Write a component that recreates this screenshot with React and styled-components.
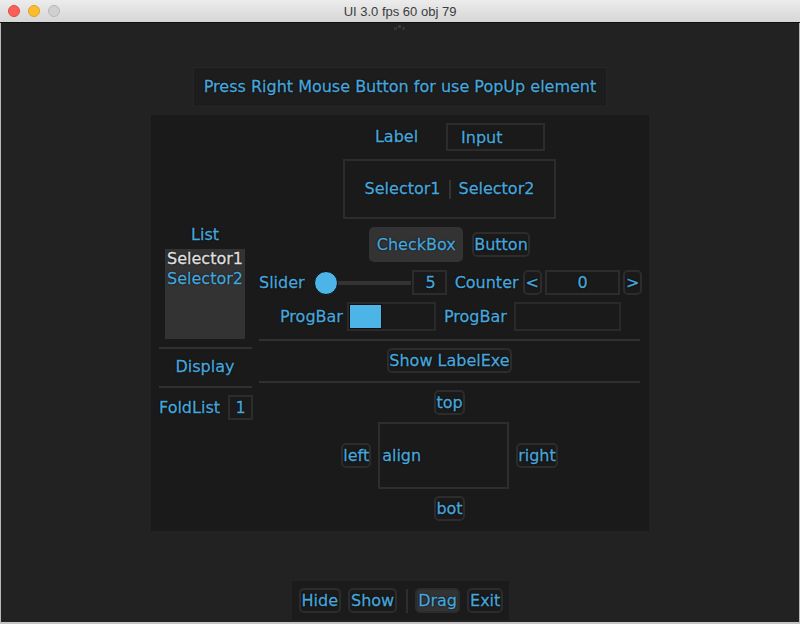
import React from 'react'
import styled, { createGlobalStyle } from 'styled-components'

const Global = createGlobalStyle`
  html, body {
    margin: 0;
    padding: 0;
    background: #d8d8d8;
  }
`

const BLUE = '#49a6db'

const Window = styled.div`
  width: 800px;
  height: 624px;
  display: flex;
  flex-direction: column;
  overflow: hidden;
  font-family: "DejaVu Sans", "Noto Sans", sans-serif;
`

const TitleBar = styled.div`
  height: 22px;
  flex: none;
  display: flex;
  align-items: center;
  position: relative;
  background: linear-gradient(#ececec, #d6d6d6);
  border-bottom: 1px solid #0f0f0f;
`

const Lights = styled.div`
  display: flex;
  gap: 8px;
  padding-left: 8px;
`

const Light = styled.span`
  width: 12px;
  height: 12px;
  border-radius: 50%;
  box-sizing: border-box;
  background: ${(p) => p.c};
  border: 1px solid ${(p) => p.b};
`

const Title = styled.div`
  position: absolute;
  left: 0;
  right: 0;
  text-align: center;
  font-family: "Liberation Sans", Arial, sans-serif;
  font-size: 13px;
  color: #3c3c3c;
  pointer-events: none;
`

const Body = styled.div`
  flex: 1;
  background: #222;
  border-left: 1px solid #b9b9b9;
  border-right: 1px solid #b9b9b9;
  border-bottom: 2px solid #c4c4c4;
  display: flex;
  flex-direction: column;
  align-items: center;
  color: ${BLUE};
  font-size: 16px;
  -webkit-text-stroke: 0.3px currentColor;
  text-shadow: 0 0 2px #000, 0 0 1px #000;
`

const Handle = styled.div`
  height: 8px;
  margin-top: 1px;
  display: flex;
  justify-content: center;
`

const PopupBox = styled.div`
  margin-top: 35px;
  width: 414px;
  height: 40px;
  box-sizing: border-box;
  background: #1d1d1d;
  border: 1px solid #262626;
  display: flex;
  align-items: center;
  justify-content: center;
`

const Panel = styled.div`
  margin-top: 8px;
  width: 498px;
  height: 416px;
  box-sizing: border-box;
  background: #1a1a1a;
  display: flex;
  padding: 8px 9px 10px 7px;
  gap: 7px;
`

const LeftCol = styled.div`
  width: 94px;
  flex: none;
  display: flex;
  flex-direction: column;
  align-items: center;
  padding-top: 102px;
`

const Text = styled.div`
  height: 20px;
  line-height: 20px;
  white-space: nowrap;
  color: ${(p) => p.color || BLUE};
`

const ListBox = styled.div`
  margin-top: 4px;
  width: 80px;
  height: 90px;
  background: #333;
  display: flex;
  flex-direction: column;
  align-items: center;
`

const Sep = styled.div`
  align-self: stretch;
  height: 2px;
  background: #303030;
  margin: ${(p) => p.m || '7px 0'};
  margin-left: ${(p) => p.ml || '0'};
`

const FoldRow = styled.div`
  display: flex;
  align-items: center;
  gap: 8px;
  align-self: stretch;
  margin-left: 1px;
`

const Box = styled.div`
  box-sizing: border-box;
  flex: none;
  width: ${(p) => p.w}px;
  height: ${(p) => p.h || 25}px;
  border: 2px solid #2c2c2c;
  display: flex;
  align-items: center;
  justify-content: ${(p) => p.j || 'center'};
  padding: ${(p) => p.pad || '0'};
`

const RightCol = styled.div`
  width: 381px;
  flex: none;
  display: flex;
  flex-direction: column;
  align-items: center;
`

const Row = styled.div`
  display: flex;
  align-items: center;
  gap: ${(p) => p.gap ?? 8}px;
  margin-top: ${(p) => p.mt ?? 0}px;
  margin-left: ${(p) => p.ml ?? 0}px;
  align-self: ${(p) => (p.full ? 'stretch' : 'auto')};
`

const SelectorBox = styled.div`
  margin-top: 8px;
  width: 213px;
  height: 60px;
  box-sizing: border-box;
  border: 2px solid #2c2c2c;
  display: flex;
  align-items: center;
  justify-content: center;
  gap: 8px;
`

const VBar = styled.div`
  width: 2px;
  height: 19px;
  background: #333;
`

const Btn = styled.div`
  box-sizing: border-box;
  flex: none;
  height: 25px;
  padding: 0 ${(p) => p.px ?? 0}px;
  border: 2px solid #2c2c2c;
  border-radius: 5px;
  background: ${(p) => (p.active ? '#333' : '#1a1a1a')};
  display: flex;
  align-items: center;
  line-height: 1;
`

const CheckBtn = styled.div`
  width: 94px;
  height: 35px;
  border-radius: 5px;
  background: #333;
  display: flex;
  align-items: center;
  justify-content: center;
`

const SliderTrack = styled.div`
  display: flex;
  align-items: center;
  flex: none;
  width: 97px;
  margin-left: ${(p) => p.ml}px;
`

const Knob = styled.div`
  width: 24px;
  height: 24px;
  border-radius: 50%;
  background: #4db4e8;
  box-sizing: border-box;
  border: 1px solid #0a0a0a;
  flex: none;
`

const Track = styled.div`
  flex: 1;
  height: 4px;
  background: #333;
`

const Prog = styled.div`
  box-sizing: border-box;
  flex: none;
  width: ${(p) => p.w}px;
  height: 29px;
  border: 2px solid #2a2a2a;
  display: flex;
`

const Fill = styled.div`
  background: #4db4e8;
  border: 1px solid #0e0e0e;
  box-sizing: border-box;
`

const AlignBox = styled.div`
  width: 131px;
  height: 67px;
  box-sizing: border-box;
  border: 2px solid #2e2e2e;
  display: flex;
  align-items: center;
  padding-left: 2px;
`

const Spacer = styled.div`
  flex: 1;
`

const BottomBar = styled.div`
  width: 217px;
  height: 39px;
  margin-bottom: 2px;
  background: #1b1b1b;
  display: flex;
  align-items: center;
  gap: 7px;
  padding-left: 7px;
  box-sizing: border-box;
`

const BarSep = styled.div`
  width: 2px;
  height: 24px;
  background: #2e2e2e;
  margin-left: 2px;
`

export default function App() {
  const progress = 31
  return (
    <Window>
      <Global />
      <TitleBar>
        <Lights>
          <Light c="#fc5f57" b="#de4a42" />
          <Light c="#fdbc2e" b="#dea123" />
          <Light c="#d0d0d0" b="#b8b8b8" />
        </Lights>
        <Title>UI 3.0 fps 60 obj 79</Title>
      </TitleBar>
      <Body>
        <Handle>
          <svg width="12" height="8" viewBox="0 0 12 8">
            <rect x="0" y="3" width="3" height="3" fill="#333" />
            <rect x="4" y="1" width="3" height="3" fill="#3a3a3a" />
            <rect x="8" y="3" width="3" height="3" fill="#333" />
          </svg>
        </Handle>
        <PopupBox>
          <Text>Press Right Mouse Button for use PopUp element</Text>
        </PopupBox>
        <Panel>
          <LeftCol>
            <Text>List</Text>
            <ListBox>
              <Text color="#e0e0e0">Selector1</Text>
              <Text>Selector2</Text>
            </ListBox>
            <Sep m="8px 0 8px" ml="1px" />
            <Text>Display</Text>
            <Sep m="9px 0 7px" ml="1px" />
            <FoldRow>
              <Text>FoldList</Text>
              <Box w={25}>1</Box>
            </FoldRow>
          </LeftCol>
          <RightCol>
            <Row gap={28} ml={21}>
              <Text>Label</Text>
              <Box w={99} h={28} j="flex-start" pad="0 0 0 13px">Input</Box>
            </Row>
            <SelectorBox>
              <Text>Selector1</Text>
              <VBar />
              <Text>Selector2</Text>
            </SelectorBox>
            <Row gap={9} mt={8}>
              <CheckBtn>CheckBox</CheckBtn>
              <Btn>Button</Btn>
            </Row>
            <Row gap={0} mt={8} full>
              <Text>Slider</Text>
              <SliderTrack ml={9}>
                <Knob />
                <Track />
              </SliderTrack>
              <Box w={35} j="flex-end" pad="0 9px 0 0" style={{ marginLeft: 1 }}>5</Box>
              <Text style={{ marginLeft: 8 }}>Counter</Text>
              <Btn px={1} style={{ marginLeft: 4 }}>&lt;</Btn>
              <Box w={75} style={{ marginLeft: 3 }}>0</Box>
              <Btn px={1} style={{ marginLeft: 3 }}>&gt;</Btn>
            </Row>
            <Row gap={4} mt={7} full style={{ paddingLeft: 21 }}>
              <Text>ProgBar</Text>
              <Prog w={89}>
                <Fill style={{ width: progress + 2 }} />
              </Prog>
              <Text style={{ marginLeft: 4 }}>ProgBar</Text>
              <Prog w={107} style={{ marginLeft: 3 }} />
            </Row>
            <Sep m="8px 0 7px" />
            <Btn>Show LabelExe</Btn>
            <Sep m="8px 0 7px" />
            <Btn>top</Btn>
            <Row gap={7} mt={7}>
              <Btn>left</Btn>
              <AlignBox>align</AlignBox>
              <Btn>right</Btn>
            </Row>
            <Btn style={{ marginTop: 7 }}>bot</Btn>
          </RightCol>
        </Panel>
        <Spacer />
        <BottomBar>
          <Btn px={1}>Hide</Btn>
          <Btn px={1}>Show</Btn>
          <BarSep />
          <Btn px={1} active>Drag</Btn>
          <Btn px={1}>Exit</Btn>
        </BottomBar>
      </Body>
    </Window>
  )
}
